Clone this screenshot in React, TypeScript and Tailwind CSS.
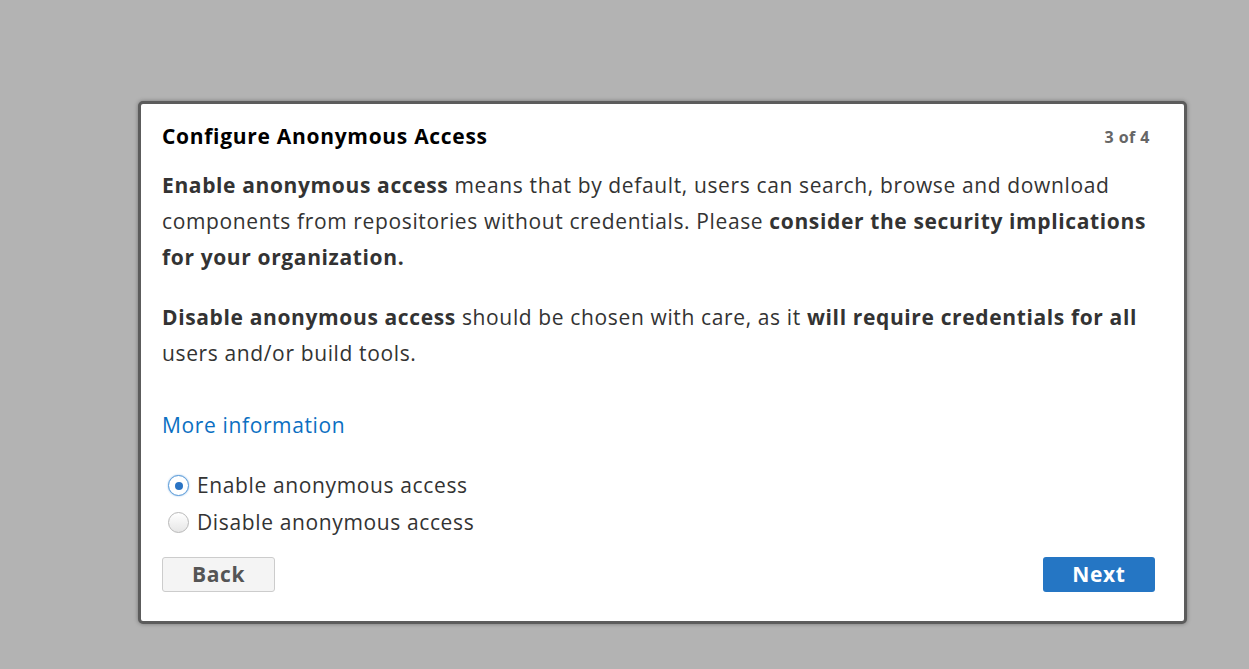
import React from 'react';

const font = { fontFamily: '"Open Sans", Lato, sans-serif' };

function Radio({ checked, label }: { checked: boolean; label: string }) {
  return (
    <label className="flex items-center gap-[8px] h-[37px]">
      <span
        className={`flex items-center justify-center w-[21px] h-[21px] rounded-full border ${
          checked ? 'border-[#5a9bd8] bg-white shadow-[0_0_2px_#8ab8e6]' : 'border-[#b8b8b8] bg-gradient-to-b from-white to-[#e6e6e6]'
        }`}
      >
        {checked && <span className="w-[8px] h-[8px] rounded-full bg-[#2a74c4]" />}
      </span>
      <span className="text-[21px] tracking-[0.03em] text-[#333]">{label}</span>
    </label>
  );
}

export default function App() {
  return (
    <div className="min-h-[669px] bg-[#b3b3b3] pt-[101px] pl-[138px]" style={font}>
      <div className="w-[1049px] h-[523px] bg-white border-[3px] border-[#5c5c5c] rounded-[5px] shadow-[0_0_4px_rgba(0,0,0,0.35)] pl-[21px] pr-[29px] pt-[18px] flex flex-col">
        <div className="flex items-center justify-between h-[30px]">
          <h1 className="text-[21px] tracking-[0.7px] font-bold text-black">Configure Anonymous Access</h1>
          <span className="mr-[5px] text-[16px] tracking-[0.03em] font-bold text-[#666]">3 of 4</span>
        </div>
        <div className="mt-[15px] text-[21px] tracking-[0.03em] leading-[36px] text-[#333]">
          <p>
            <b>Enable anonymous access</b> means that by default, users can search, browse and download components from
            repositories without credentials. Please <b>consider the security implications for your organization.</b>
          </p>
          <p className="mt-[24px]">
            <b>Disable anonymous access</b> should be chosen with care, as it <b>will require credentials for all</b> users
            and/or build tools.
          </p>
        </div>
        <a className="mt-[36px] text-[21px] tracking-[0.03em] leading-[36px] text-[#0b6fc2] self-start">More information</a>
        <div className="mt-[24px] pl-[6px]">
          <Radio checked label="Enable anonymous access" />
          <Radio checked={false} label="Disable anonymous access" />
        </div>
        <div className="mt-[16px] flex justify-between">
          <button className="w-[113px] h-[35px] rounded-[3px] border border-[#ccc] bg-[#f4f4f4] text-[21px] tracking-[0.03em] font-bold text-[#555]">
            Back
          </button>
          <button className="w-[112px] h-[35px] rounded-[3px] bg-[#2576c4] text-[21px] tracking-[0.03em] font-bold text-white">
            Next
          </button>
        </div>
      </div>
    </div>
  );
}
